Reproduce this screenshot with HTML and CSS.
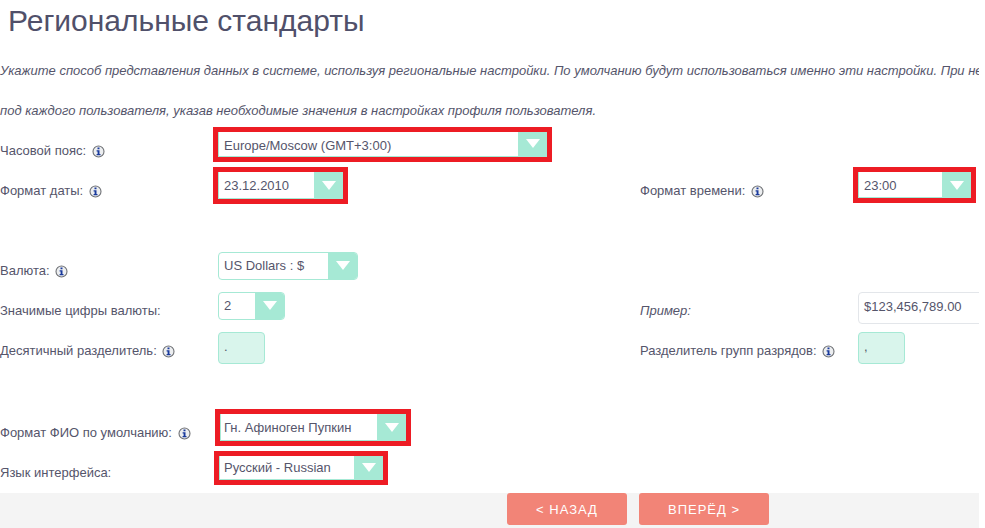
FILE: index.html
```html
<!DOCTYPE html>
<html lang="ru">
<head>
<meta charset="utf-8">
<title>Региональные стандарты</title>
<link rel="stylesheet" href="styles.css">
</head>
<body>
<svg class="defs" width="0" height="0" aria-hidden="true">
  <symbol id="info" viewBox="0 0 13 13">
    <circle cx="6.5" cy="6.5" r="5.5" fill="#eceef0" stroke="#6f7175" stroke-width="1.1"/>
    <path d="M5.5 2.6h2v1.7h-2zM4.6 5.2h2.9v3.9h1v1.2H4.6V9.1h1V6.4h-1z" fill="#1a3a9c"/>
  </symbol>
</svg>
<main class="page">
  <h1 class="title">Региональные стандарты</h1>
  <p class="intro">Укажите способ представления данных в системе, используя региональные настройки. По умолчанию будут использоваться именно эти настройки. При необходимости их можно изменить</p>
  <p class="intro">под каждого пользователя, указав необходимые значения в настройках профиля пользователя.</p>

  <div class="row">
    <label class="label">Часовой пояс: <svg class="info"><use href="#info"/></svg></label>
    <div class="select flagged w-tz"><span class="value">Europe/Moscow (GMT+3:00)</span><span class="arrow"></span></div>
  </div>
  <div class="row">
    <label class="label">Формат даты: <svg class="info"><use href="#info"/></svg></label>
    <div class="select flagged w-date"><span class="value">23.12.2010</span><span class="arrow"></span></div>
    <label class="label right">Формат времени: <svg class="info"><use href="#info"/></svg></label>
    <div class="select flagged w-time"><span class="value">23:00</span><span class="arrow"></span></div>
  </div>
  <div class="row spacer"></div>
  <div class="row">
    <label class="label">Валюта: <svg class="info"><use href="#info"/></svg></label>
    <div class="select w-cur"><span class="value">US Dollars : $</span><span class="arrow"></span></div>
  </div>
  <div class="row">
    <label class="label">Значимые цифры валюты:</label>
    <div class="select w-dig"><span class="value">2</span><span class="arrow"></span></div>
    <label class="label right example">Пример:</label>
    <div class="field example-field">$123,456,789.00</div>
  </div>
  <div class="row">
    <label class="label">Десятичный разделитель: <svg class="info"><use href="#info"/></svg></label>
    <div class="field sep">.</div>
    <label class="label right">Разделитель групп разрядов: <svg class="info"><use href="#info"/></svg></label>
    <div class="field sep">,</div>
  </div>
  <div class="row spacer short"></div>
  <div class="row fio">
    <label class="label">Формат ФИО по умолчанию: <svg class="info"><use href="#info"/></svg></label>
    <div class="select flagged w-fio"><span class="value">Гн. Афиноген Пупкин</span><span class="arrow"></span></div>
  </div>
  <div class="row lang">
    <label class="label">Язык интерфейса:</label>
    <div class="select flagged w-lang"><span class="value">Русский - Russian</span><span class="arrow"></span></div>
  </div>

  <footer class="footer">
    <button class="btn back" type="button">&lt; НАЗАД</button>
    <button class="btn next" type="button">ВПЕРЁД &gt;</button>
  </footer>
</main>
</body>
</html>
```

FILE: styles.css
```css
* { box-sizing: border-box; }
html, body { margin: 0; padding: 0; height: 100%; overflow: hidden; background: #fff; }
.defs { position: absolute; }
.page {
  width: 979px;
  height: 528px;
  overflow: hidden;
  font-family: "Liberation Sans", Arial, sans-serif;
  font-size: 13px;
  color: #55556b;
}
.title {
  margin: 0;
  height: 50px;
  padding-left: 8px;
  font-size: 30px;
  font-weight: 400;
  line-height: 42px;
  color: #50506a;
}
.intro {
  margin: 0;
  height: 40px;
  line-height: 42px;
  font-size: 13px;
  font-style: italic;
  white-space: nowrap;
  overflow: hidden;
}
.intro + .row { margin-top: 2px; }
.row {
  display: grid;
  grid-template-columns: 218px 422px 218px 121px;
  height: 40px;
  align-items: start;
}
.row.spacer { height: 40px; }
.row.spacer.short { height: 42px; }
.row.fio { height: 42px; }
.row.lang { height: 37px; }
.label {
  grid-column: 1;
  line-height: 38px;
  white-space: nowrap;
}
.lang .label { line-height: 34px; }
.label.right { grid-column: 3; }
.example { font-style: italic; }
.info {
  width: 13px;
  height: 13px;
  margin-left: 2px;
  vertical-align: -3px;
}
.select {
  grid-column: 2;
  display: flex;
  justify-content: space-between;
  height: 28px;
  border: 1px solid #a6e9d5;
  border-radius: 4px;
  background: #fff;
  overflow: hidden;
}
.row > .label.right + .select,
.row > .label.right + .field { grid-column: 4; }
.value {
  padding-left: 5px;
  line-height: 26px;
  white-space: nowrap;
}
.arrow {
  position: relative;
  flex: 0 0 29px;
  background: #a6e9d5;
}
.arrow::after {
  content: "";
  position: absolute;
  left: 8px;
  top: 8px;
  border-style: solid;
  border-width: 9px 7px 0;
  border-color: #fff transparent transparent;
}
.flagged {
  outline: 5px solid #ed1c24;
  border-radius: 0;
  border-width: 0 0 1px 1px;
}
.flagged .value { line-height: 28px; }
.flagged .arrow::after { top: 9px; }
.w-tz { width: 329px; height: 25px; }
.w-tz .arrow::after, .w-lang .arrow::after { top: 7px; }
.w-date { width: 125px; height: 27px; }
.w-time { width: 113px; height: 26px; }
.w-cur { width: 140px; }
.w-dig { width: 67px; }
.w-fio { width: 186px; height: 27px; margin-left: 2px; }
.w-fio .value { padding-left: 3px; }
.w-lang { width: 164px; height: 24px; margin-left: 1px; }
.w-lang .value { padding-left: 4px; line-height: 24px; }
.field {
  grid-column: 2;
  height: 32px;
  border: 1px solid #a6e9d5;
  border-radius: 4px;
  line-height: 28px;
  padding-left: 5px;
}
.sep { width: 47px; background: #d9f5ec; }
.example-field {
  width: 130px;
  border-color: #e3e6ea;
  background: #fff;
}
.footer {
  display: flex;
  gap: 12px;
  height: 35px;
  padding-left: 507px;
  background: #f4f4f4;
}
.btn {
  height: 32px;
  padding: 0;
  border: 0;
  border-radius: 3px;
  background: #f28477;
  color: #fff;
  font-family: "Liberation Sans", Arial, sans-serif;
  font-size: 13px;
  letter-spacing: 1px;
}
.back { width: 120px; }
.next { width: 130px; }
```
